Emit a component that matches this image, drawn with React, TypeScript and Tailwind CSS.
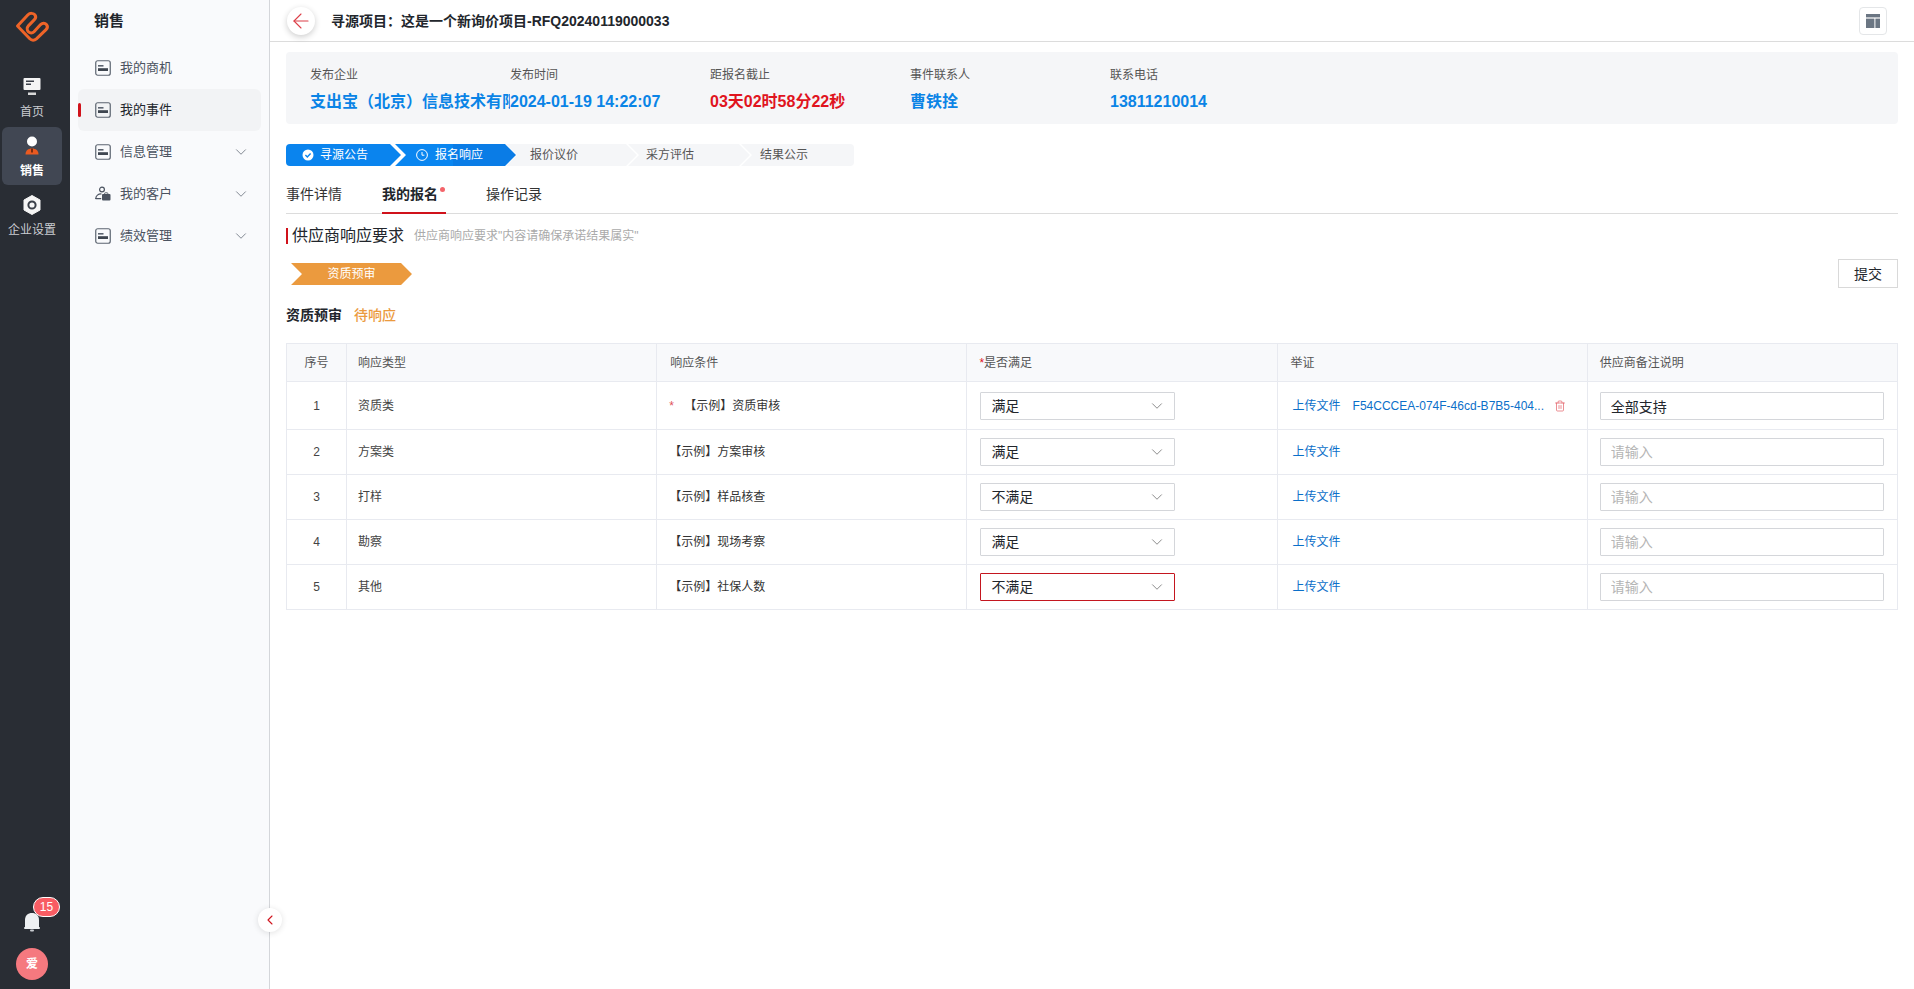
import { ChevronDown, ChevronLeft, ArrowLeft, Trash2 } from 'lucide-react'

const rows = [
  { no: 1, type: '资质类', cond: '【示例】资质审核', val: '满足', note: '全部支持', required: true, file: 'F54CCCEA-074F-46cd-B7B5-404...' },
  { no: 2, type: '方案类', cond: '【示例】方案审核', val: '满足' },
  { no: 3, type: '打样', cond: '【示例】样品核查', val: '不满足' },
  { no: 4, type: '勘察', cond: '【示例】现场考察', val: '满足' },
  { no: 5, type: '其他', cond: '【示例】社保人数', val: '不满足', error: true },
]

function MenuIcon() {
  return (
    <svg width="16" height="16" viewBox="0 0 16 16" fill="none" className="shrink-0">
      <rect x="0.75" y="0.75" width="14.5" height="14.5" rx="2" stroke="#5c6470" strokeWidth="1.2" />
      <rect x="3" y="5" width="5.5" height="1.6" fill="#5c6470" />
      <rect x="3" y="8.2" width="10" height="2.8" fill="#3f4650" />
    </svg>
  )
}

function CustomerIcon() {
  return (
    <svg width="16" height="16" viewBox="0 0 16 16" fill="none" className="shrink-0">
      <circle cx="7" cy="3.5" r="2.4" stroke="#4b5360" strokeWidth="1.2" />
      <path d="M0.8 12.5c0-2.8 2.6-4.6 5.2-4.6" stroke="#4b5360" strokeWidth="1.2" strokeLinecap="round" />
      <path d="M0.8 12.6h5" stroke="#4b5360" strokeWidth="1.2" strokeLinecap="round" />
      <rect x="7" y="8" width="8.5" height="6.5" rx="1" fill="#4b5360" />
      <rect x="9.6" y="6.8" width="3.2" height="2" rx="0.6" stroke="#4b5360" strokeWidth="0.9" />
    </svg>
  )
}

function NavItem({ label, active, arrow, icon }: { label: string; active?: boolean; arrow?: boolean; icon?: React.ReactNode }) {
  return (
    <div className={`relative flex h-[42px] items-center rounded-md pl-[17px] pr-[11px] text-[13px] ${active ? 'bg-[#f2f3f5] text-[#22262c]' : 'text-[#4b5360]'}`}>
      {active && <span className="absolute left-0 top-[14px] h-[14px] w-[3px] rounded-sm bg-[#d0121b]" />}
      {icon ?? <MenuIcon />}
      <span className="ml-[9px] flex-1">{label}</span>
      {arrow && <ChevronDown size={18} strokeWidth={1} className="text-[#5c6470]" />}
    </div>
  )
}

export default function App() {
  return (
    <div className="flex h-screen w-full overflow-hidden bg-white text-[#333] [font-family:'Liberation_Sans','Noto_Sans_CJK_SC',sans-serif]">
      {/* RAIL */}
      <aside className="flex h-full w-[70px] shrink-0 flex-col justify-between bg-[#292d34]">
        <div>
          <svg width="64" height="54" viewBox="0 1 64 54" fill="none" className="block">
            <path
              d="M17.5 27 L28 15.8 C30 13.8 33.2 14 34.8 15.8 C36.2 17.5 35.8 19.2 34.4 20.6 L28.6 26.6 C26.8 28.6 26.8 31.2 28.4 32.8 C30 34.4 32.4 34.4 34 32.8 L40.6 25.6 C42.4 23.8 45 23.8 46.4 25.4 C47.8 27 47.6 29 46 30.6 L36.4 39.8 C34.4 41.6 31.6 41.6 29.8 39.8 Z"
              stroke="#ee6428"
              strokeWidth="3"
              strokeLinejoin="round"
            />
          </svg>
          <div className="mt-6 flex w-16 flex-col items-center">
            <svg width="18" height="18" viewBox="0 0 18 18">
              <rect x="0.5" y="0" width="17" height="12" rx="1" fill="#f4f4f4" />
              <rect x="3" y="2.5" width="8" height="1.5" fill="#3a3f48" />
              <rect x="3" y="5.5" width="5" height="1.5" fill="#3a3f48" />
              <rect x="5" y="14.5" width="8" height="2.5" fill="#d8d8d8" />
            </svg>
            <span className="mt-2 text-xs leading-4 text-[#c9ccd1]">首页</span>
          </div>
          <div className="ml-0.5 mt-[7px] flex h-[58px] w-[60px] flex-col items-center rounded-md bg-[#414753] pt-[9px]">
            <svg width="18" height="20" viewBox="0 0 18 20">
              <circle cx="9" cy="5.5" r="5" fill="#ffffff" />
              <path d="M2.5 18.5c0-4 2.6-6 6.5-6s6.5 2 6.5 6z" fill="#ea5a20" />
              <rect x="8" y="12.5" width="2" height="4" fill="#7a2c0f" />
            </svg>
            <span className="mt-[7px] text-xs font-semibold leading-4 text-white">销售</span>
          </div>
          <div className="mt-[10px] flex w-16 flex-col items-center">
            <svg width="18" height="20" viewBox="0 0 18 20">
              <path d="M9 0.5 L17 5 V15 L9 19.5 L1 15 V5 Z" fill="#f6f6f6" stroke="#f6f6f6" strokeLinejoin="round" />
              <circle cx="9" cy="10" r="3.6" fill="none" stroke="#3a3f48" strokeWidth="2" />
            </svg>
            <span className="mt-[7px] text-xs leading-4 text-[#c9ccd1]">企业设置</span>
          </div>
        </div>
        <div className="flex w-16 flex-col items-center pb-[9px]">
          <div className="relative">
            <svg width="16" height="20" viewBox="0 0 16 20">
              <path d="M1 16 V8 C1 3.5 4 1 8 1 C12 1 15 3.5 15 8 V16 Z" fill="#eef0f2" />
              <rect x="0" y="15" width="16" height="2" rx="1" fill="#eef0f2" />
              <rect x="6" y="17.5" width="4" height="2" rx="1" fill="#c9ccd1" />
            </svg>
            <span className="absolute -top-[15px] left-[9px] flex h-[20px] w-[27px] items-center justify-center rounded-full border border-white bg-[#f85c63] text-xs text-white">
              15
            </span>
          </div>
          <div className="mt-[16px] flex h-8 w-8 items-center justify-center rounded-full bg-[#f5797f] text-xs font-semibold text-white">
            爱
          </div>
        </div>
      </aside>

      {/* SECOND MENU */}
      <aside className="relative h-full w-[200px] shrink-0 border-r border-[#d4d6da] bg-[#f9fafc] px-2">
        <div className="flex h-[42px] items-center pl-[16px] text-[15px] font-semibold text-[#22262c]">销售</div>
        <div className="mt-[5px]">
          <NavItem label="我的商机" />
          <NavItem label="我的事件" active />
          <NavItem label="信息管理" arrow />
          <NavItem label="我的客户" arrow icon={<CustomerIcon />} />
          <NavItem label="绩效管理" arrow />
        </div>
        <button className="absolute -right-[13px] bottom-[57px] z-10 flex h-6 w-6 items-center justify-center rounded-full bg-white shadow-[0_1px_6px_rgba(0,0,0,0.12)]">
          <ChevronLeft size={16} strokeWidth={1.6} className="text-[#d0121b]" />
        </button>
      </aside>

      {/* MAIN */}
      <main className="min-w-0 flex-1">
        <header className="flex h-[42px] items-center justify-between border-b border-[#dcdcdc] pl-[17px] pr-[27px]">
          <div className="flex items-center">
            <span className="flex h-7 w-7 items-center justify-center rounded-full bg-white shadow-[0_2px_6px_rgba(0,0,0,0.2)]">
              <ArrowLeft size={24} strokeWidth={1.1} className="text-[#dc3f48]" />
            </span>
            <span className="ml-[16px] text-sm font-semibold text-[#22262c]">寻源项目：这是一个新询价项目-RFQ20240119000033</span>
          </div>
          <span className="flex h-7 w-7 items-center justify-center rounded-sm border border-[#e4e6e8]">
            <svg width="14" height="14" viewBox="0 0 14 14" fill="#6b7683">
              <rect x="0" y="0" width="14" height="3.4" />
              <rect x="0" y="4.6" width="8.4" height="9.4" />
              <rect x="9.4" y="4.6" width="4.6" height="9.4" />
            </svg>
          </span>
        </header>

        <div className="px-4 pt-[10px]">
          {/* INFO */}
          <div className="flex h-[72px] rounded bg-[#f5f6f8] pl-6 pt-[14px]">
            {[
              ['发布企业', '支出宝（北京）信息技术有限公司', 'text-[#0a84e6]'],
              ['发布时间', '2024-01-19 14:22:07', 'text-[#0a84e6]'],
              ['距报名截止', '03天02时58分22秒', 'text-[#e0141e]'],
              ['事件联系人', '曹铁拴', 'text-[#0a84e6]'],
              ['联系电话', '13811210014', 'text-[#0a84e6]'],
            ].map(([label, value, color]) => (
              <div key={label} className="w-[200px]">
                <div className="text-xs leading-[18px] text-[#555]">{label}</div>
                <div className={`mt-[7px] overflow-hidden whitespace-nowrap text-base font-semibold leading-[22px] ${color}`}>{value}</div>
              </div>
            ))}
          </div>

          {/* STEPS */}
          <div className="mt-5 flex h-[22px] text-xs leading-[22px]">
            <div className="flex w-[115px] items-center rounded-l bg-[#0a84ee] pl-4 text-white [clip-path:polygon(0_0,calc(100%-11px)_0,100%_50%,calc(100%-11px)_100%,0_100%)]">
              <svg width="12" height="12" viewBox="0 0 12 12">
                <circle cx="6" cy="6" r="5.5" fill="#fff" />
                <path d="M3.4 6.1 5.3 8 8.6 4.5" fill="none" stroke="#0a84ee" strokeWidth="1.4" />
              </svg>
              <span className="ml-[6px]">寻源公告</span>
            </div>
            <div className="-ml-[6px] flex w-[121px] items-center bg-[linear-gradient(90deg,#0a86f0_58px,#0a7ce6_58px)] pl-[21px] text-white [clip-path:polygon(0_0,calc(100%-11px)_0,100%_50%,calc(100%-11px)_100%,0_100%,11px_50%)]">
              <svg width="12" height="12" viewBox="0 0 12 12" fill="none" stroke="#fff">
                <circle cx="6" cy="6" r="5.4" />
                <path d="M6 3v3.2h2.4" />
              </svg>
              <span className="ml-[7px]">报名响应</span>
            </div>
            <div className="-ml-[10px] w-[131px] bg-[#f5f6f8] pl-6 text-[#555] [clip-path:polygon(0_0,calc(100%-11px)_0,100%_50%,calc(100%-11px)_100%,0_100%,11px_50%)]">
              报价议价
            </div>
            <div className="-ml-[9px] w-[122px] bg-[#f5f6f8] pl-[18px] text-[#555] [clip-path:polygon(0_0,calc(100%-11px)_0,100%_50%,calc(100%-11px)_100%,0_100%,11px_50%)]">
              采方评估
            </div>
            <div className="-ml-[9px] w-[113px] rounded-r bg-[#f5f6f8] pl-[19px] text-[#555] [clip-path:polygon(0_0,100%_0,100%_100%,0_100%,11px_50%)]">
              结果公示
            </div>
          </div>

          {/* TABS */}
          <div className="mt-[17px] flex h-[31px] gap-10 border-b border-[#dcdcdc] text-sm">
            <span className="h-[31px] leading-[22px] text-[#333]">事件详情</span>
            <span className="relative h-[31px] w-[64px] border-b-2 border-[#d0121b] font-semibold leading-[22px] text-[#22262c]">
              我的报名
              <span className="absolute left-[58px] top-[4px] h-[5px] w-[5px] rounded-full bg-[#f4646a]" />
            </span>
            <span className="h-[31px] leading-[22px] text-[#333]">操作记录</span>
          </div>

          {/* HEADING */}
          <div className="mt-[13px] flex h-[18px] items-center">
            <span className="h-[16px] w-0.5 bg-[#d0121b]" />
            <span className="ml-1 text-base leading-[18px] text-[#22262c]">供应商响应要求</span>
            <span className="ml-[10px] text-xs text-[#aaa]">供应商响应要求"内容请确保承诺结果属实"</span>
          </div>

          <div className="mt-[14px] flex h-[29px] items-start justify-between">
            <span className="ml-[5px] mt-1 flex h-[22px] w-[121px] items-center justify-center bg-[#eb9a3e] text-xs text-white [clip-path:polygon(0_0,calc(100%-11px)_0,100%_50%,calc(100%-11px)_100%,0_100%,11px_50%)]">
              资质预审
            </span>
            <button className="h-[29px] w-[60px] border border-[#d9d9d9] bg-white text-sm text-[#22262c]">提交</button>
          </div>

          <div className="mt-[17px] flex h-5 items-center text-sm leading-5">
            <span className="font-semibold text-[#22262c]">资质预审</span>
            <span className="ml-3 font-medium text-[#eb9a3e]">待响应</span>
          </div>

          {/* TABLE */}
          <table className="mt-[18px] w-full table-fixed border-collapse text-xs">
            <colgroup>
              <col className="w-[60px]" />
            </colgroup>
            <thead>
              <tr className="h-[38px] bg-[#f8f9fb] text-[#555]">
                <th className="border border-[#e8eaf0] text-center font-normal">序号</th>
                <th className="border border-[#e8eaf0] pl-[11px] text-left font-normal">响应类型</th>
                <th className="border border-[#e8eaf0] pl-[13px] text-left font-normal">响应条件</th>
                <th className="border border-[#e8eaf0] pl-3 text-left font-normal">
                  <span className="text-[#e0141e]">*</span>是否满足
                </th>
                <th className="border border-[#e8eaf0] pl-[13px] text-left font-normal">举证</th>
                <th className="border border-[#e8eaf0] pl-3 text-left font-normal">供应商备注说明</th>
              </tr>
            </thead>
            <tbody>
              {rows.map((r) => (
                <tr key={r.no} className={r.no === 1 ? 'h-[48px]' : 'h-[45px]'}>
                  <td className="border border-[#e8eaf0] text-center text-[#444]">{r.no}</td>
                  <td className="border border-[#e8eaf0] pl-[11px] text-[#444]">{r.type}</td>
                  <td className="border border-[#e8eaf0] pl-3 text-[#333]">
                    {r.required && <span className="mr-[9px] inline-block w-[6px] text-[#e0525a]">*</span>}
                    {r.cond}
                  </td>
                  <td className="border border-[#e8eaf0] pl-[13px]">
                    <div className={`flex h-7 w-[195px] items-center justify-between rounded-[1px] border pl-[10px] pr-2 text-sm text-[#22262c] ${r.error ? 'border-[#c4161f]' : 'border-[#d4d6da]'}`}>
                      {r.val}
                      <ChevronDown size={18} strokeWidth={1} className="text-[#666]" />
                    </div>
                  </td>
                  <td className="border border-[#e8eaf0] pl-[15px] text-[#0b6fc9]">
                    <div className="flex items-center">
                      <span>上传文件</span>
                      {r.file && <span className="ml-3 w-[197px] whitespace-nowrap">{r.file}</span>}
                      {r.file && <Trash2 size={12} strokeWidth={1.3} className="ml-[4px] text-[#e0525a]" />}
                    </div>
                  </td>
                  <td className="border border-[#e8eaf0] pl-3">
                    <input
                      readOnly
                      value={r.note ?? ''}
                      placeholder="请输入"
                      className="h-7 w-[284px] rounded-[1px] border border-[#d4d6da] px-[10px] text-sm text-[#22262c] outline-none placeholder:text-[#b5b5b5]"
                    />
                  </td>
                </tr>
              ))}
            </tbody>
          </table>
        </div>
      </main>
    </div>
  )
}
